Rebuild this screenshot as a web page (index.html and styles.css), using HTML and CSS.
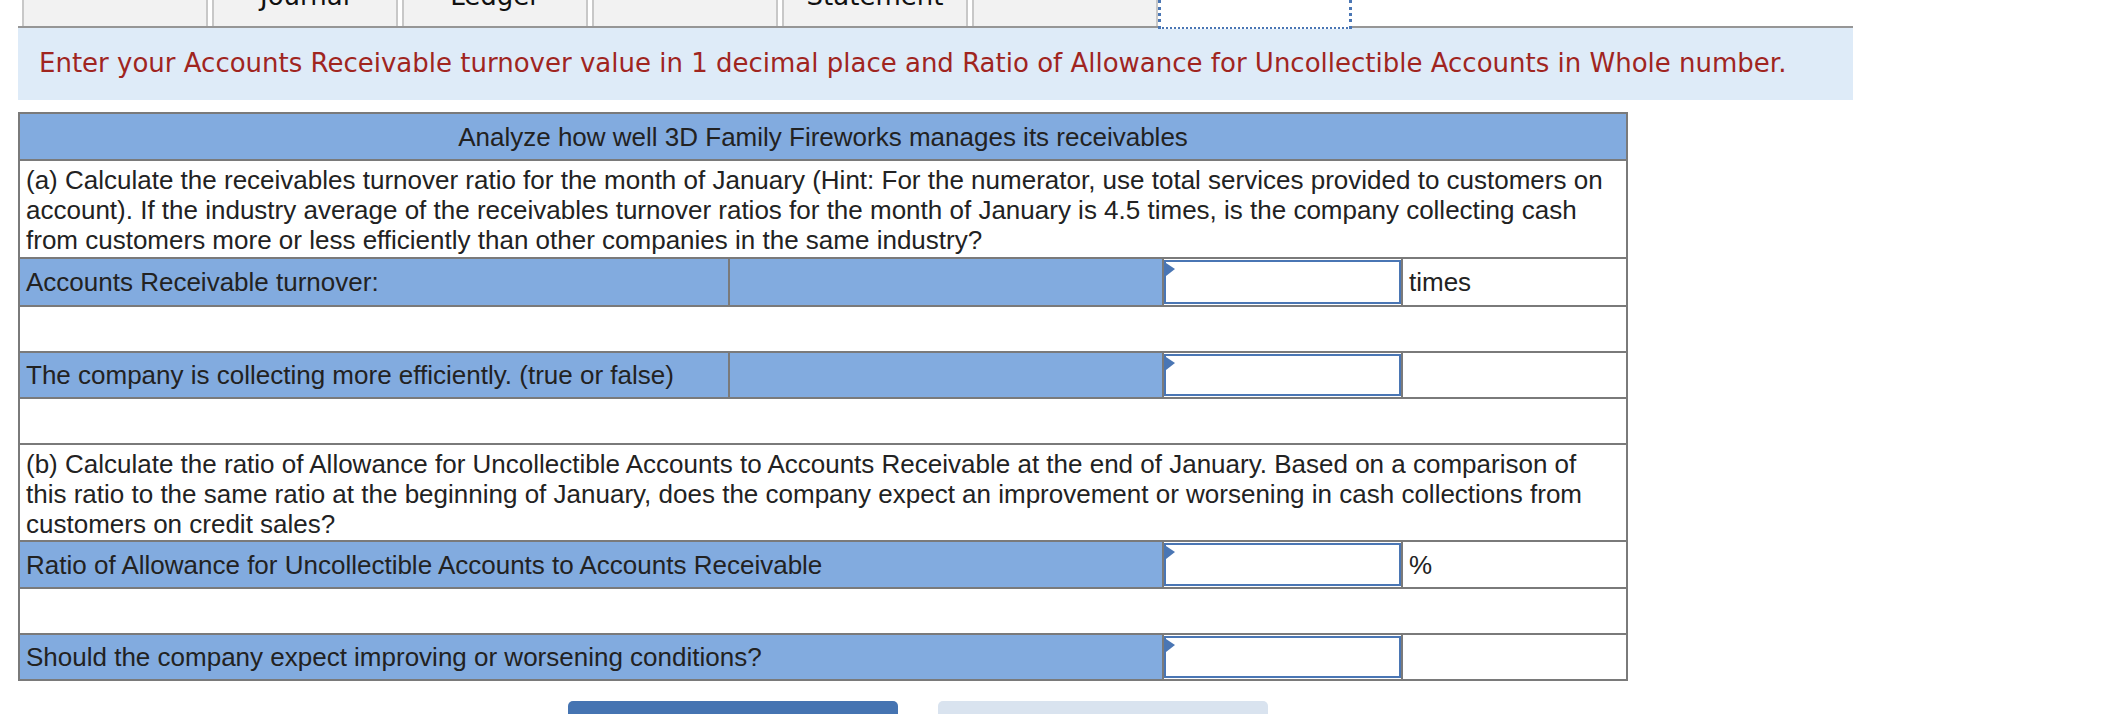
FILE: index.html
```
<!DOCTYPE html>
<html lang="en">
<head>
<meta charset="utf-8">
<title>Analyze receivables</title>
<link rel="stylesheet" href="styles.css">
</head>
<body>
<div class="tabs">
  <div class="tab"></div>
  <div class="tab"><span class="tab-label">Journal</span></div>
  <div class="tab"><span class="tab-label">Ledger</span></div>
  <div class="tab"></div>
  <div class="tab"><span class="tab-label">Statement</span></div>
  <div class="tab"></div>
  <div class="tab tab-active"></div>
</div>
<div class="banner">Enter your Accounts Receivable turnover value in 1 decimal place and Ratio of Allowance for Uncollectible Accounts in Whole number.</div>

<table class="grid">
  <colgroup>
    <col class="c1"><col class="c2"><col class="c3"><col class="c4">
  </colgroup>
  <tr class="r-head"><td colspan="4" class="blue center">Analyze how well 3D Family Fireworks manages its receivables</td></tr>
  <tr class="r-text"><td colspan="4" class="text">(a) Calculate the receivables turnover ratio for the month of January (Hint: For the numerator, use total services provided to customers on<br>account). If the industry average of the receivables turnover ratios for the month of January is 4.5 times, is the company collecting cash<br>from customers more or less efficiently than other companies in the same industry?</td></tr>
  <tr class="r-line r-first"><td class="blue">Accounts Receivable turnover:</td><td class="blue"></td><td class="inp"><div class="answer"><svg class="flag" width="10" height="14" viewBox="0 0 10 14"><polygon points="0,0 9,6 0,13" fill="#4a76b4"/></svg></div></td><td>times</td></tr>
  <tr class="r-empty"><td colspan="4"></td></tr>
  <tr class="r-line"><td class="blue">The company is collecting more efficiently. (true or false)</td><td class="blue"></td><td class="inp"><div class="answer"><svg class="flag" width="10" height="14" viewBox="0 0 10 14"><polygon points="0,0 9,6 0,13" fill="#4a76b4"/></svg></div></td><td></td></tr>
  <tr class="r-empty"><td colspan="4"></td></tr>
  <tr class="r-text2"><td colspan="4" class="text">(b) Calculate the ratio of Allowance for Uncollectible Accounts to Accounts Receivable at the end of January. Based on a comparison of<br>this ratio to the same ratio at the beginning of January, does the company expect an improvement or worsening in cash collections from<br>customers on credit sales?</td></tr>
  <tr class="r-line r-ratio"><td colspan="2" class="blue">Ratio of Allowance for Uncollectible Accounts to Accounts Receivable</td><td class="inp"><div class="answer"><svg class="flag" width="10" height="14" viewBox="0 0 10 14"><polygon points="0,0 9,6 0,13" fill="#4a76b4"/></svg></div></td><td>%</td></tr>
  <tr class="r-empty"><td colspan="4"></td></tr>
  <tr class="r-line"><td colspan="2" class="blue">Should the company expect improving or worsening conditions?</td><td class="inp"><div class="answer"><svg class="flag" width="10" height="14" viewBox="0 0 10 14"><polygon points="0,0 9,6 0,13" fill="#4a76b4"/></svg></div></td><td></td></tr>
</table>

<div class="buttons">
  <div class="btn btn-primary"></div>
  <div class="btn btn-secondary"></div>
</div>
</body>
</html>
```
FILE: styles.css
```
html, body {
  margin: 0;
  padding: 0;
  background: #ffffff;
}
body {
  width: 2110px;
  height: 714px;
  overflow: hidden;
  font-family: "DejaVu Sans", Verdana, sans-serif;
}
.tabs {
  display: flex;
  gap: 4px;
  margin-left: 18px;
  width: 1835px;
  height: 28px;
  padding-left: 4px;
  box-sizing: border-box;
  border-bottom: 2px solid #969696;
}
.tab {
  width: 186px;
  height: 26px;
  box-sizing: border-box;
  background: #f2f2f2;
  border-left: 2px solid #c8c8c8;
  border-right: 2px solid #c8c8c8;
  overflow: hidden;
  text-align: center;
  font-size: 26px;
  line-height: 30px;
  color: #111;
}
.tab-label {
  display: block;
  margin-top: -19px;
}
.tab-active {
  width: 194px;
  height: 29px;
  margin-left: -4px;
  background: #ffffff;
  border-left: 3px dotted #4a76b4;
  border-right: 3px dotted #4a76b4;
  border-bottom: 2px dotted #4a76b4;
  position: relative;
  z-index: 1;
}
.banner {
  margin-left: 18px;
  width: 1835px;
  height: 72px;
  box-sizing: border-box;
  background: #deebf8;
  color: #a0251f;
  font-size: 26px;
  line-height: 30px;
  padding: 20px 0 0 21px;
}
.grid {
  border-collapse: collapse;
  table-layout: fixed;
  margin: 12px 0 0 18px;
  width: 1608px;
  font-family: "Liberation Sans", Arial, Helvetica, sans-serif;
  font-size: 26px;
  color: #222222;
}
.c1 { width: 710px; }
.c2 { width: 434px; }
.c3 { width: 239px; }
.c4 { width: 225px; }
.grid td {
  border: 2px solid #7a7a7a;
  padding: 0 6px;
  line-height: 30px;
  vertical-align: middle;
  white-space: nowrap;
}
.grid td.blue {
  background: #82abdf;
}
.grid td.center {
  text-align: center;
}
.grid td.text {
  vertical-align: top;
  padding-top: 4px;
}
.r-head { height: 47px; }
.r-text { height: 98px; }
.r-text2 { height: 97px; }
.r-line { height: 46px; }
.r-first { height: 48px; }
.r-ratio { height: 47px; }
.r-empty { height: 46px; }
.grid td.inp {
  padding: 0;
}
.answer {
  position: relative;
  height: 42px;
  box-sizing: border-box;
  border: 2px solid #4a76b4;
  background: #ffffff;
}
.r-first .answer {
  height: 44px;
}
.r-ratio .answer {
  height: 43px;
}
.flag {
  position: absolute;
  left: 0;
  top: 1px;
  display: block;
}
.buttons {
  display: flex;
  gap: 40px;
  margin-top: 20px;
  padding-left: 568px;
}
.btn {
  width: 330px;
  height: 50px;
  border-radius: 5px;
}
.btn-primary { background: #4574b2; }
.btn-secondary { background: #d9e3ef; }
```
